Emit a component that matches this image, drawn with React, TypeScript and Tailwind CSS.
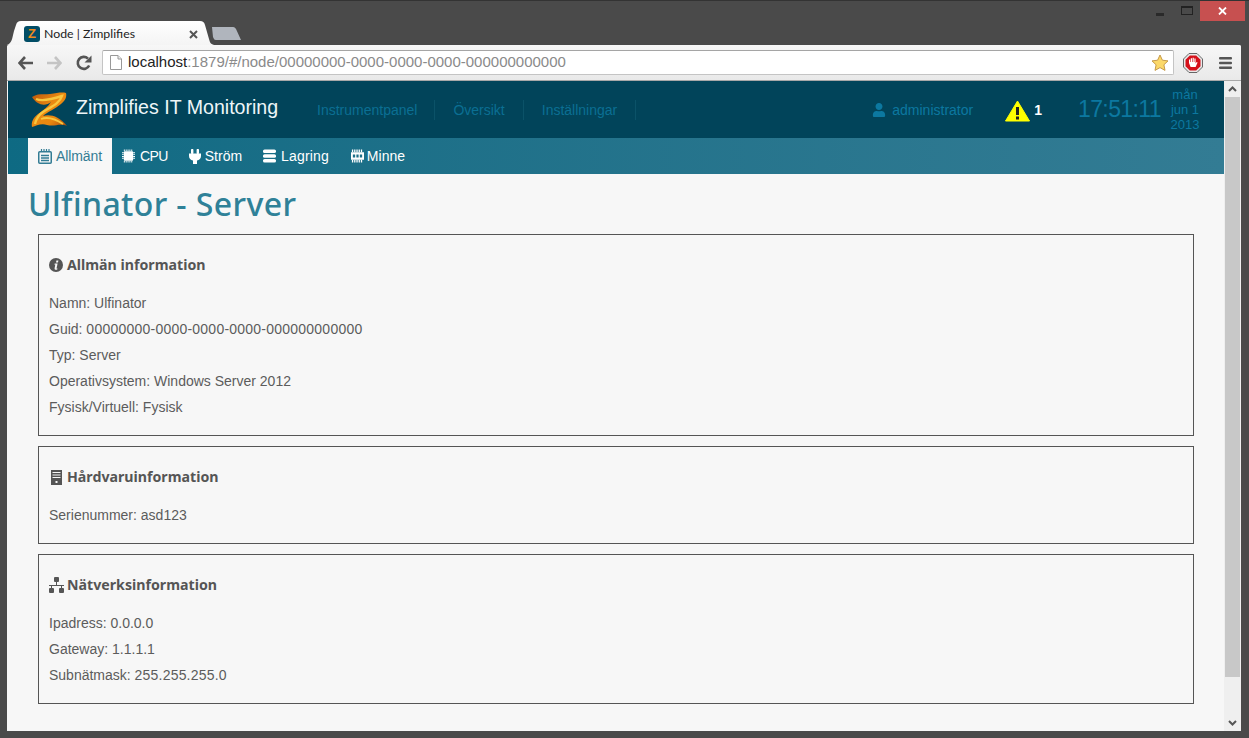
import React from "react";
import { FaUser } from "react-icons/fa";

function ZLogo() {
  return (
    <svg width="38" height="36" viewBox="0 0 38 36" className="shrink-0">
      <defs>
        <linearGradient id="zg" x1="0" y1="0" x2="1" y2="1">
          <stop offset="0" stopColor="#b9540b" />
          <stop offset="0.45" stopColor="#ea8a12" />
          <stop offset="0.7" stopColor="#e8860f" />
          <stop offset="1" stopColor="#a9480a" />
        </linearGradient>
      </defs>
      <path d="M1 5C7 1 13 3 19 2C26 1 31 0 35 1C36 5 34 9 30 12C24 17 16 20 12 24C19 22 28 24 36 34C28 31 24 35 16 33C10 31 5 34 1 35C0 30 2 26 7 22C12 18 17 15 20 10C14 15 6 13 1 5Z" fill="url(#zg)" />
      <path d="M5 7C12 10 22 7 31 4C29 11 20 15 12 20C7 23 5 28 4 32" fill="none" stroke="#f8c63e" strokeWidth="2.4" />
      <path d="M10 27C18 24 26 28 32 32" fill="none" stroke="#f8c63e" strokeWidth="1.8" />
    </svg>
  );
}

function CalendarIcon() {
  return (
    <svg width="14" height="15" viewBox="0 0 14 15" fill="none" stroke="#337c94" className="shrink-0">
      <rect x="0.75" y="2.75" width="12.5" height="11.5" rx="1" strokeWidth="1.5" />
      <path d="M3.5 0v3M6 0v3M8.5 0v3M11 0v3" strokeWidth="1.2" />
      <path d="M3 6.5h8M3 9h8M3 11.5h8" strokeWidth="1.3" />
    </svg>
  );
}

function CpuIcon() {
  return (
    <svg width="13" height="14" viewBox="0 0 14 14" fill="#fff" className="shrink-0">
      <rect x="2" y="2" width="10" height="10" rx="1" />
      <path d="M2 0h1v2H2zM4 0h1v2H4zM6 0h1v2H6zM8 0h1v2H8zM10 0h1v2h-1zM2 12h1v2H2zM4 12h1v2H4zM6 12h1v2H6zM8 12h1v2H8zM10 12h1v2h-1zM0 3h2v1H0zM0 5h2v1H0zM0 7h2v1H0zM0 9h2v1H0zM12 3h2v1h-2zM12 5h2v1h-2zM12 7h2v1h-2zM12 9h2v1h-2z" />
    </svg>
  );
}

function PlugIcon() {
  return (
    <svg width="12" height="15" viewBox="0 0 12 15" fill="#fff" className="shrink-0">
      <rect x="2" y="0" width="2.4" height="5" rx="0.8" />
      <rect x="7.6" y="0" width="2.4" height="5" rx="0.8" />
      <path d="M0 4.5h12V7c0 2.6-1.6 4.2-4 4.6V15H4v-3.4C1.6 11.2 0 9.6 0 7Z" />
    </svg>
  );
}

function StackIcon() {
  return (
    <svg width="13" height="14" viewBox="0 0 13 14" fill="#fff" className="shrink-0">
      <rect x="0" y="0.5" width="13" height="3.6" rx="1.6" />
      <rect x="0" y="5.2" width="13" height="3.6" rx="1.6" />
      <rect x="0" y="9.9" width="13" height="3.6" rx="1.6" />
    </svg>
  );
}

function MemoryIcon() {
  return (
    <svg width="13" height="14" viewBox="0 0 14 14" fill="#fff" className="shrink-0">
      <path d="M1 0h1.4v3H1zM3.4 0h1.4v3H3.4zM5.8 0h1.4v3H5.8zM8.2 0h1.4v3H8.2zM10.6 0H12v3h-1.4zM1 11h1.4v3H1zM3.4 11h1.4v3H3.4zM5.8 11h1.4v3H5.8zM8.2 11h1.4v3H8.2zM10.6 11H12v3h-1.4z" />
      <path d="M0 3h14v8H0zM2 5.5v3h2.5v-3zM5.8 5.5v3h2.4v-3zM9.5 5.5v3H12v-3z" fillRule="evenodd" />
    </svg>
  );
}

function InfoIcon() {
  return (
    <svg width="14" height="14" viewBox="0 0 14 14" className="shrink-0">
      <circle cx="7" cy="7" r="7" fill="#555" />
      <path d="M7.4 2.4h2l-.4 2h-2zM6.2 5.4h2.4L7.6 10c-.1.5.2.6.9.4l-.2 1.1c-1.6.6-3 .2-2.7-1.3l.7-3.6-1 0 .2-.8z" fill="#f7f7f7" />
    </svg>
  );
}

function TowerIcon() {
  return (
    <svg width="11" height="15" viewBox="0 0 11 15" fill="#555" className="shrink-0">
      <path d="M0 0h11v15H0zM1.5 2v1h8V2zM1.5 4.5v1h8v-1zM1.5 7v1h8V7zM4.5 11v2h2v-2z" fillRule="evenodd" />
    </svg>
  );
}

function NetworkIcon() {
  return (
    <svg width="15" height="16" viewBox="0 0 15 16" className="shrink-0">
      <rect x="5" y="0" width="5" height="5" rx="1" fill="#555" />
      <path d="M0 8.5h15M7.5 5v3.5M2.5 8.5V11M12.5 8.5V11" stroke="#555" strokeWidth="1" fill="none" />
      <rect x="0" y="11" width="5" height="5" rx="1" fill="#555" />
      <rect x="10" y="11" width="5" height="5" rx="1" fill="#555" />
    </svg>
  );
}

function Warning() {
  return (
    <svg width="25" height="22" viewBox="0 0 25 22" className="shrink-0 mt-[2px]">
      <path d="M12.5 1L24.5 21H0.5Z" fill="#ffff00" stroke="#ffff00" strokeLinejoin="round" />
      <rect x="11" y="7" width="3" height="8" fill="#222" />
      <rect x="11" y="16.5" width="3" height="3" fill="#222" />
    </svg>
  );
}

function Box({ icon, title, lines }: { icon: React.ReactNode; title: string; lines: React.ReactNode[] }) {
  return (
    <section className="border border-[#555] px-[10px] pt-[15px] pb-[15px]">
      <h3 className="h-[30px] mb-[10px] flex items-center gap-[4px] text-[14.2px] font-bold text-[#555] font-['Noto_Sans',sans-serif]">
        <span className="w-[14px] flex justify-center">{icon}</span>
        {title}
      </h3>
      {lines.map((l, i) => (
        <p key={i} className="h-[26px] leading-[26px] text-[14px] text-[#5c5c5c]">{l}</p>
      ))}
    </section>
  );
}

export default function App() {
  return (
    <div className="w-[1249px] h-[738px] overflow-hidden flex flex-col bg-[#4a4a4a] font-['Liberation_Sans',Arial,sans-serif]">
      {/* Tab strip */}
      <div className="h-[45px] flex justify-between shrink-0 border-t border-[#333]">
        <div className="relative w-[260px] h-full">
          <svg width="242" height="44" viewBox="0 0 242 44" className="absolute left-0 top-0">
            <defs>
              <linearGradient id="tabg" x1="0" y1="0" x2="0" y2="1">
                <stop offset="0" stopColor="#ffffff" />
                <stop offset="1" stopColor="#f4f4f4" />
              </linearGradient>
            </defs>
            <path d="M7 44C12 42 12 38 14 30L16 24C17 21 18 20 21 20H200C203 20 204 21 205 24L209 38C210 42 211 43 214 44Z" fill="url(#tabg)" />
            <path d="M212 26H233C235 26 235 27 236 28L241 39H216C214 39 214 38 213 36Z" fill="#b0b5bd" />
          </svg>
          <div className="absolute left-[24px] top-[24px] flex items-center w-[174px]">
            <span className="w-[16px] h-[16px] rounded-[3px] bg-[#014d66] text-[#f08a1c] text-[13px] font-bold leading-[16px] text-center mr-[4px]">Z</span>
            <span className="text-[12.3px] text-[#222] font-['Lato',sans-serif] flex-1">Node | Zimplifies</span>
            <svg width="9" height="9" viewBox="0 0 9 9" stroke="#555" strokeWidth="2"><path d="M1 1l7 7M8 1l-7 7" /></svg>
          </div>
        </div>
        <div className="flex items-start mr-[4px]">
          <div className="w-[28px] h-[20px] flex items-center justify-center">
            <span className="w-[8px] h-[3px] bg-[#2a2a2a] mt-[6px]" />
          </div>
          <div className="w-[26px] h-[20px] flex items-center justify-center">
            <span className="w-[12px] h-[9px] border border-[#222] border-t-[2px] -mt-[1px]" />
          </div>
          <div className="w-[45px] h-[20px] bg-[#c75050] flex items-center justify-center">
            <svg width="9" height="8" viewBox="0 0 9 8" stroke="#fff" strokeWidth="1.8"><path d="M1 0.5l7 7M8 0.5l-7 7" /></svg>
          </div>
        </div>
      </div>

      {/* Browser */}
      <div className="flex-1 ml-[7px] mr-[8px] mb-[7px] flex flex-col min-h-0 overflow-hidden bg-[#f7f7f7] rounded-t-[2px]">
        <div className="h-[36px] shrink-0 flex items-center bg-gradient-to-b from-[#f7f7f7] to-[#e9e9e9] border-b border-[#a8a8a8]">
          <div className="w-[95px] pl-[11px] flex items-center gap-[14px] shrink-0">
            <svg width="15" height="14" viewBox="0 0 15 14"><path d="M7 1L1.5 7 7 13M2 7h13" fill="none" stroke="#555" strokeWidth="2.6" /></svg>
            <svg width="15" height="14" viewBox="0 0 15 14"><path d="M8 1l5.5 6L8 13M13 7H0" fill="none" stroke="#c4c4c4" strokeWidth="2.6" /></svg>
            <svg width="16" height="16" viewBox="0 0 16 16"><path d="M13.2 10.5A6 6 0 1 1 12 3.6" fill="none" stroke="#555" strokeWidth="2.6" /><path d="M15.5 0.5v7h-7z" fill="#555" /></svg>
          </div>
          <div className="w-[1072px] h-[25px] shrink-0 bg-white border border-[#c4c4c4] border-t-[#a5a5a5] rounded-[2px] flex items-center pl-[7px] pr-[4px]">
            <svg width="12" height="15" viewBox="0 0 12 15" className="shrink-0"><path d="M0.5 0.5H8L11.5 4V14.5H0.5Z" fill="#fff" stroke="#999" /><path d="M8 0.5V4H11.5" fill="#eee" stroke="#999" /></svg>
            <span className="ml-[6px] flex-1 text-[15px] whitespace-nowrap text-[#8a8a8a]"><span className="text-[#222]">localhost</span>:1879/#/node/00000000-0000-0000-0000-000000000000</span>
            <svg width="18" height="18" viewBox="0 0 18 18" className="shrink-0"><path d="M9 1l2.4 5.2 5.6.7-4.1 3.9 1.1 5.6L9 13.6 4 16.4l1.1-5.6L1 6.9l5.6-.7z" fill="#fbd869" stroke="#c69a4a" /></svg>
          </div>
          <div className="flex items-center ml-[9px] gap-[16px]">
            <svg width="20" height="20" viewBox="0 0 20 20" className="shrink-0">
              <path d="M6 0.5h8L19.5 6v8L14 19.5H6L0.5 14V6Z" fill="#e8e8e8" stroke="#666" />
              <path d="M6.8 2.5h6.4L17.5 6.8v6.4L13.2 17.5H6.8L2.5 13.2V6.8Z" fill="#d5101a" />
              <path d="M6 10V6.5h1.2V9h.6V5.2H9V9h.6V4.8h1.2V9h.6V5.4h1.2v5.2l1-1.6 1 .6-2 4.4H7.6L6 10Z" fill="#fff" />
            </svg>
            <svg width="13" height="12" viewBox="0 0 13 12" fill="#555" className="shrink-0"><rect width="13" height="2.6" rx="1" /><rect y="4.7" width="13" height="2.6" rx="1" /><rect y="9.4" width="13" height="2.6" rx="1" /></svg>
          </div>
        </div>

        <div className="flex-1 flex min-h-0">
          <div className="flex-1 min-w-0 ml-px">
            {/* App header */}
            <header className="h-[57px] bg-[#01445a] flex items-center">
              <div className="ml-[23px] w-[45px] mt-[1px]"><ZLogo /></div>
              <span className="text-[19.6px] text-[#eef6f8] w-[241px] -mt-[3px] whitespace-nowrap">Zimplifies IT Monitoring</span>
              <nav className="flex text-[14px] text-[#0b6f93]">
                {["Instrumentpanel", "Översikt", "Inställningar"].map((n) => (
                  <a key={n} className="h-[20px] leading-[20px] px-[18px] border-r border-[#0b5268] first:pl-0 first:pr-[17px]">{n}</a>
                ))}
              </nav>
              <div className="ml-auto flex items-center text-[#0c78a0]">
                <FaUser size={14} className="mr-[6px] mt-[1px]" />
                <span className="text-[14px] mr-[32px] mt-[2px]">administrator</span>
                <Warning />
                <span className="text-[14px] font-bold text-white ml-[4px] mr-[36px] mt-[2px]">1</span>
                <span className="text-[23px] tracking-[-0.6px] mr-[9px]">17:51:11</span>
                <div className="w-[30px] mr-[24px] text-[13px] leading-[15px] text-center whitespace-nowrap flex flex-col items-center">
                  <span>mån</span><span>jun 1</span><span>2013</span>
                </div>
              </div>
            </header>

            {/* Sub navigation */}
            <nav className="h-[36px] pl-[20px] flex bg-gradient-to-r from-[#0e6a83] to-[#337c94] text-[14px] text-white">
              <a className="flex items-center gap-[4px] px-[10px] bg-[#f7f7f7] text-[#337c94] tracking-[-0.1px]"><CalendarIcon />Allmänt</a>
              <a className="flex items-center gap-[5px] px-[10px] tracking-[-0.6px]"><CpuIcon />CPU</a>
              <a className="flex items-center gap-[4px] ml-[1px] px-[10px]"><PlugIcon />Ström</a>
              <a className="flex items-center gap-[5px] ml-[1px] px-[10px] tracking-[0.15px]"><StackIcon />Lagring</a>
              <a className="flex items-center gap-[3px] ml-[2px] px-[10px]"><MemoryIcon />Minne</a>
            </nav>

            {/* Page */}
            <main className="bg-[#f7f7f7]">
              <h1 className="h-[60px] pl-[20px] flex items-center text-[32px] tracking-[0.4px] font-medium text-[#2f8198] font-['Noto_Sans',sans-serif]">Ulfinator - Server</h1>
              <div className="mx-[30px] flex flex-col gap-[10px]">
                <Box icon={<InfoIcon />} title="Allmän information" lines={["Namn: Ulfinator", <>Guid: <span className="tracking-[0.23px]">00000000-0000-0000-0000-000000000000</span></>, "Typ: Server", "Operativsystem: Windows Server 2012", "Fysisk/Virtuell: Fysisk"]} />
                <Box icon={<TowerIcon />} title="Hårdvaruinformation" lines={["Serienummer: asd123"]} />
                <Box icon={<NetworkIcon />} title="Nätverksinformation" lines={["Ipadress: 0.0.0.0", "Gateway: 1.1.1.1", <>Subnätmask: <span className="tracking-[0.2px]">255.255.255.0</span></>]} />
              </div>
            </main>
          </div>

          {/* Scrollbar */}
          <div className="w-[17px] shrink-0 bg-[#efefef] flex flex-col items-center">
            <div className="h-[16px] flex items-center justify-center">
              <svg width="9" height="6" viewBox="0 0 9 6"><path d="M1 5l3.5-3.5L8 5" fill="none" stroke="#555" strokeWidth="2" /></svg>
            </div>
            <div className="w-[15px] h-[580px] bg-[#c8c8c8]" />
            <div className="flex-1 flex items-end pb-[5px]">
              <svg width="9" height="6" viewBox="0 0 9 6"><path d="M1 1l3.5 3.5L8 1" fill="none" stroke="#555" strokeWidth="2" /></svg>
            </div>
          </div>
        </div>
      </div>
    </div>
  );
}
